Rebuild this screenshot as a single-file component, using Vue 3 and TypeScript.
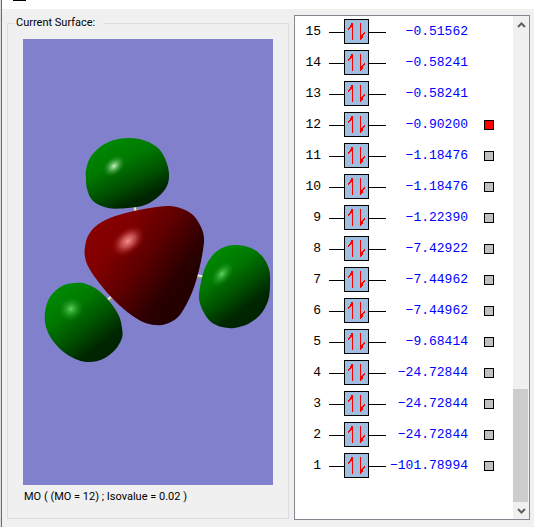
<script setup lang="ts">
import { ref } from 'vue'

type Point = [number, number]
interface Lobe {
  id: string
  fill: string
  outline: Point[]
}
interface Orbital {
  index: number
  energy: string
  selectable: boolean
}

// Coordinates are in the 250 x 446 space of the surface view.
const lobes: Lobe[] = [
  {
    id: 'top', fill: 'url(#shade-top)',
    outline: [[63, 131], [67, 119], [77, 108], [91, 101], [107, 99], [123, 102], [136, 110], [143, 122], [146, 135], [144, 147], [135, 158], [122, 166], [105, 169], [85, 169], [70, 162], [64, 150], [63, 139]],
  },
  {
    id: 'left', fill: 'url(#shade-left)',
    outline: [[52, 244], [39, 247], [27, 258], [22, 273], [23, 288], [30, 302], [42, 314], [55, 321], [67, 323], [80, 320], [92, 311], [99, 299], [99, 289], [96, 277], [87, 263], [75, 251], [63, 245]],
  },
  {
    id: 'center', fill: 'url(#shade-center)',
    outline: [[62, 208], [65, 197], [73, 187], [87, 179], [107, 173], [127, 169], [144, 167], [157, 169], [170, 176], [178, 188], [181, 199], [180, 211], [176, 231], [170, 251], [162, 268], [154, 279], [143, 285], [132, 286], [120, 283], [107, 275], [92, 262], [77, 245], [66, 229], [62, 218]],
  },
  {
    id: 'right', fill: 'url(#shade-right)',
    outline: [[212, 206], [199, 209], [189, 217], [182, 229], [178, 243], [176, 259], [180, 272], [188, 283], [199, 288], [211, 289], [225, 285], [237, 276], [245, 262], [247, 246], [246, 230], [239, 217], [228, 209]],
  },
]

// Closed Catmull-Rom curve through the points, written as cubic segments.
function smooth(points: Point[]): string {
  const n = points.length
  const at = (i: number): Point => points[(i + n) % n]
  let d = `M${at(0).join(' ')}`
  for (let i = 0; i < n; i++) {
    const [a, b, c, e] = [at(i - 1), at(i), at(i + 1), at(i + 2)]
    d += `C${b[0] + (c[0] - a[0]) / 6} ${b[1] + (c[1] - a[1]) / 6} ${c[0] - (e[0] - b[0]) / 6} ${c[1] - (e[1] - b[1]) / 6} ${c[0]} ${c[1]}`
  }
  return d + 'Z'
}

const energies = ['0.51562', '0.58241', '0.58241', '0.90200', '1.18476', '1.18476', '1.22390', '7.42922', '7.44962', '7.44962', '9.68414', '24.72844', '24.72844', '24.72844', '101.78994']
const orbitals: Orbital[] = energies.map((value, i) => ({
  index: 15 - i,
  energy: '\u2212' + value,
  selectable: 15 - i <= 12,
}))
const selected = ref(12)
</script>

<template>
  <div class="window">
    <header class="titlebar"><span class="glyph"></span></header>
    <main class="content">
      <fieldset class="surface">
        <legend>Current Surface:</legend>
        <svg class="view" viewBox="0 0 250 446" preserveAspectRatio="xMidYMid meet" role="img" aria-label="Molecular orbital surface">
          <defs>
            <linearGradient id="shade-top" gradientUnits="userSpaceOnUse" x1="86" y1="102" x2="120" y2="174">
              <stop offset="0" stop-color="#008800" /><stop offset=".3" stop-color="#007900" /><stop offset=".58" stop-color="#005200" /><stop offset=".82" stop-color="#002600" /><stop offset="1" stop-color="#002300" />
            </linearGradient>
            <linearGradient id="shade-left" gradientUnits="userSpaceOnUse" x1="32" y1="250" x2="84" y2="318">
              <stop offset="0" stop-color="#008a00" /><stop offset=".3" stop-color="#007900" /><stop offset=".58" stop-color="#005200" /><stop offset=".84" stop-color="#002600" /><stop offset="1" stop-color="#002300" />
            </linearGradient>
            <linearGradient id="shade-right" gradientUnits="userSpaceOnUse" x1="190" y1="216" x2="234" y2="276">
              <stop offset="0" stop-color="#008800" /><stop offset=".3" stop-color="#007700" /><stop offset=".58" stop-color="#005000" /><stop offset=".82" stop-color="#002800" /><stop offset="1" stop-color="#002300" />
            </linearGradient>
            <linearGradient id="shade-center" gradientUnits="userSpaceOnUse" x1="72" y1="186" x2="160" y2="250">
              <stop offset="0" stop-color="#8a0000" /><stop offset=".25" stop-color="#800000" /><stop offset=".55" stop-color="#5e0000" /><stop offset=".88" stop-color="#2c0000" /><stop offset="1" stop-color="#240000" />
            </linearGradient>
            <radialGradient id="glow-green">
              <stop offset="0" stop-color="#c8f5c8" /><stop offset=".35" stop-color="#7cc67c" stop-opacity=".75" /><stop offset="1" stop-color="#108a10" stop-opacity="0" />
            </radialGradient>
            <radialGradient id="glow-soft">
              <stop offset="0" stop-color="#5fd35f" /><stop offset=".4" stop-color="#38ac38" stop-opacity=".7" /><stop offset="1" stop-color="#108a10" stop-opacity="0" />
            </radialGradient>
            <radialGradient id="glow-red">
              <stop offset="0" stop-color="#f59090" /><stop offset=".4" stop-color="#d96060" stop-opacity=".75" /><stop offset="1" stop-color="#900000" stop-opacity="0" />
            </radialGradient>
          </defs>
          <g stroke-width="4">
            <path d="M111 165L113 174M82 264L91 256M172 237L184 239" stroke="#96968e" />
            <path d="M111 165L113 174M82 263L90 256M172 236L184 238" stroke="#e8e8e4" stroke-width="2" />
          </g>
          <path v-for="lobe in lobes" :key="lobe.id" :d="smooth(lobe.outline)" :fill="lobe.fill" />
          <ellipse cx="91" cy="127" rx="13" ry="9" transform="rotate(-42 91 127)" fill="url(#glow-green)" />
          <ellipse cx="48" cy="270" rx="13" ry="12" transform="rotate(-35 48 270)" fill="url(#glow-soft)" />
          <ellipse cx="199" cy="235" rx="15" ry="9" transform="rotate(-50 199 235)" fill="url(#glow-soft)" />
          <ellipse cx="105" cy="202" rx="20" ry="13" transform="rotate(-40 105 202)" fill="url(#glow-red)" />
        </svg>
        <p class="caption">MO ( (MO = 12) ; Isovalue = 0.02 )</p>
      </fieldset>

      <section class="list" aria-label="Molecular orbitals">
        <table>
          <colgroup><col class="c-index" /><col class="c-level" /><col class="c-energy" /><col /></colgroup>
          <tbody>
            <tr v-for="o in orbitals" :key="o.index">
              <th scope="row">{{ o.index }}</th>
              <td class="level">
                <svg width="57" height="25" viewBox="0 0 57 25" shape-rendering="crispEdges" aria-hidden="true">
                  <path d="M0 13.5H57" stroke="#000" />
                  <rect x="15.5" y=".5" width="24" height="24" fill="#a0bee0" stroke="#000" />
                  <path d="M23 4h1v17h-1zM22 4h1v4h-1zM21 6h1v3h-1zM20 8h1v2h-1zM19 9h1v2h-1z" fill="#f00" />
                  <path d="M31 4h1v17h-1zM32 16h1v4h-1zM33 15h1v4h-1zM34 14h1v2h-1zM35 13h1v2h-1z" fill="#f00" />
                </svg>
              </td>
              <td class="energy">{{ o.energy }}</td>
              <td class="mark">
                <input v-if="o.selectable" v-model="selected" type="radio" name="orbital" :value="o.index" :aria-label="`Orbital ${o.index}`" />
              </td>
            </tr>
          </tbody>
        </table>
        <div class="scrollbar">
          <button type="button" aria-label="Scroll up">
            <svg width="9" height="6" viewBox="0 0 9 6"><path d="M1 5L4.500 1.500L8 5" fill="none" stroke="#606060" stroke-width="2" /></svg>
          </button>
          <div class="track"><div class="thumb"></div></div>
          <button type="button" aria-label="Scroll down">
            <svg width="9" height="6" viewBox="0 0 9 6"><path d="M1 1L4.500 4.500L8 1" fill="none" stroke="#606060" stroke-width="2" /></svg>
          </button>
        </div>
      </section>
    </main>
  </div>
</template>

<style>
body {
  margin: 0;
  background: #dcdcdc;
}
</style>

<style scoped>
.window {
  box-sizing: border-box;
  min-height: 100vh;
  display: flex;
  flex-direction: column;
  margin-left: 1px;
  background: #f0f0f0;
  border-left: 1px solid #1f7fc9;
  color: #000;
  font-family: Roboto, "Liberation Sans", sans-serif;
  font-size: 11px;
}
.titlebar {
  height: 9px;
  background: #fff;
}
.glyph {
  display: block;
  width: 13px;
  height: 1px;
  margin-left: 11px;
  background: #000;
}
.content {
  flex: 1;
  display: grid;
  grid-template-columns: minmax(0, 1fr) 236px;
  gap: 5px;
  padding: 6px 4px 7px 5px;
}
.surface {
  display: flex;
  flex-direction: column;
  min-width: 0;
  margin: 0 0 1px;
  padding: 8px 15px 13px;
  border: 1px solid #dcdcdc;
}
legend {
  margin-left: -8px;
  padding: 0 9px 0 1px;
  line-height: 16px;
}
.view {
  display: block;
  width: 100%;
  flex: 1;
  min-height: 0;
  background: #8080cc;
}
.caption {
  margin: 4px 0 0 1px;
  line-height: 16px;
}
.list {
  display: flex;
  background: #fff;
  border: 1px solid #828790;
}
table {
  flex: 1;
  align-self: flex-start;
  table-layout: fixed;
  border-collapse: collapse;
  font: 13px/16px "Liberation Mono", monospace;
}
.c-index {
  width: 26px;
}
.c-level {
  width: 65px;
}
.c-energy {
  width: 82px;
}
tr {
  height: 31px;
}
th,
td {
  padding: 0;
  font-weight: 400;
  vertical-align: middle;
}
th,
.energy {
  text-align: right;
}
.energy {
  color: #00f;
}
.level svg {
  display: block;
  margin-left: 8px;
}
.mark input {
  appearance: none;
  display: block;
  box-sizing: border-box;
  width: 10px;
  height: 10px;
  margin: 1px 0 0 16px;
  border: 1px solid #000;
  background: #c0c0c0;
}
.mark input:checked {
  background: #f00;
}
.scrollbar {
  width: 16px;
  display: flex;
  flex-direction: column;
  background: #f0f0f0;
}
.scrollbar button {
  display: grid;
  place-items: center;
  height: 17px;
  padding: 0;
  border: 0;
  background: none;
}
.track {
  flex: 1;
  display: flex;
  flex-direction: column;
  justify-content: flex-end;
}
.thumb {
  height: 24%;
  margin-right: 1px;
  background: #cdcdcd;
}
</style>
